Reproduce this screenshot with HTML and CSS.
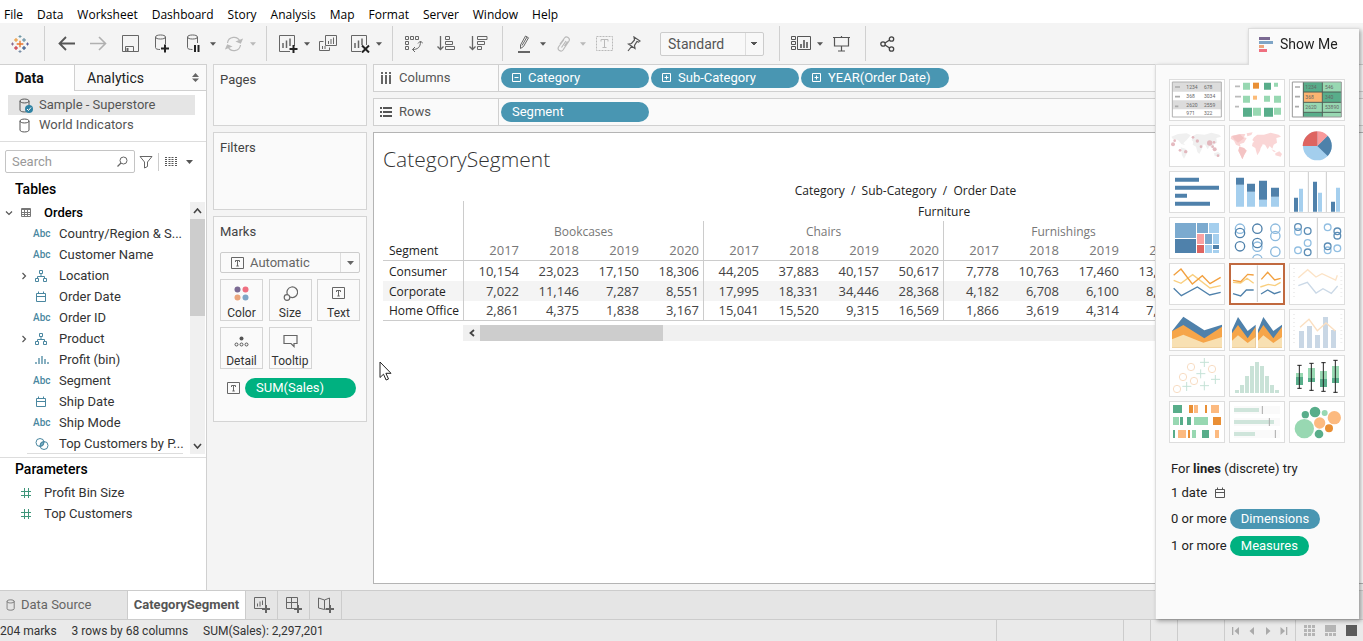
FILE: index.html
```html
<!DOCTYPE html>
<html lang="en">
<head>
<meta charset="utf-8">
<title>CategorySegment</title>
<link rel="stylesheet" href="styles.css">
</head>
<body>
<svg class="defs" aria-hidden="true">
  <symbol id="caret" viewBox="0 0 7 4"><path d="M0 0h7L3.500 4z" fill="currentColor"/></symbol>
  <symbol id="db" viewBox="0 0 12 15"><path d="M1 3v9c0 2.600 9 2.600 9 0V3M1 3c0-2.600 9-2.600 9 0s-9 2.600-9 0z" fill="none" stroke="currentColor"/></symbol>
  <symbol id="hier" viewBox="0 0 12 12"><path d="M4.500 .5h3v3h-3zM6 3.500v3M2.500 8.500v-2h7v2M.5 8.500h3v3h-3zM8.500 8.500h3v3h-3z" fill="none" stroke="currentColor"/></symbol>
  <symbol id="cal" viewBox="0 0 12 12"><path d="M1.500 2.500h9v8h-9zM1.500 5.500h9M3.500 .5v2M8.500 .5v2" fill="none" stroke="currentColor"/></symbol>
  <symbol id="hash" viewBox="0 0 12 12"><path d="M4.500 1v10M8.500 1v10M1 4.500h10M1 8.500h10" fill="none" stroke="currentColor"/></symbol>
  <symbol id="tbox" viewBox="0 0 14 12"><path d="M.5 .5h12v11H.5z" fill="none" stroke="currentColor"/><path d="M4.500 5V3.500h4V5M6.500 3.500v5.500M5.300 9h2.500" fill="none" stroke="currentColor"/></symbol>
  <symbol id="chev" viewBox="0 0 8 8"><path d="M2.500 1l3 3-3 3" fill="none" stroke="currentColor" stroke-width="1.200"/></symbol>
</svg>

<nav class="menu">
  <button>File</button><button>Data</button><button>Worksheet</button><button>Dashboard</button><button>Story</button><button>Analysis</button><button>Map</button><button>Format</button><button>Server</button><button>Window</button><button>Help</button>
</nav>

<div class="toolbar">
  <button class="tool logo" aria-label="Start page"><svg width="18" height="18" viewBox="0 0 54 54" fill="none" stroke-width="3">
    <path d="M27 17v20M17 27h20" stroke="#e8762d" stroke-width="4"/>
    <path d="M15 9v12M9 15h12" stroke="#eb9129"/><path d="M39 9v12M33 15h12" stroke="#5b879b"/>
    <path d="M15 33v12M9 39h12" stroke="#c72035"/><path d="M39 33v12M33 39h12" stroke="#1f447e"/>
    <path d="M27 0v9M22.500 4.500h9" stroke="#7099a6"/><path d="M27 45v9M22.500 49.500h9" stroke="#7b8fa8"/>
    <path d="M4.500 22.500v9M0 27h9" stroke="#8a6a8f"/><path d="M49.500 22.500v9M45 27h9" stroke="#59609c"/></svg></button>
  <span class="sep"></span>
  <button class="tool" aria-label="Undo"><svg width="17" height="15" viewBox="0 0 17 15"><path d="M17 7.500H2M8 1L1.500 7.500 8 14" fill="none" stroke="#555" stroke-width="1.800"/></svg></button>
  <button class="tool" aria-label="Redo"><svg width="17" height="15" viewBox="0 0 17 15"><path d="M0 7.500h15M9 1l6.500 6.500L9 14" fill="none" stroke="#b0b0b0" stroke-width="1.600"/></svg></button>
  <button class="tool" aria-label="Save"><svg width="17" height="17" viewBox="0 0 17 17" fill="none" stroke="#666"><path d="M.5 .5h16v16H.5zM3.500 16.500v-5h8v5"/><path d="M5.500 13v3" stroke-width="2"/></svg></button>
  <button class="tool" aria-label="New data source"><svg width="16" height="19" viewBox="0 0 16 19" fill="none" stroke="#666"><path d="M1.500 3v10.500c0 1.500 2 2 4.500 2M11.500 3v7M1.500 3c0-2.700 10-2.700 10 0s-10 2.700-10 0z"/><path d="M11 10.500v8M7 14.500h8" stroke="#222" stroke-width="2"/></svg></button>
  <button class="tool" aria-label="Pause updates"><svg width="16" height="19" viewBox="0 0 16 19" fill="none" stroke="#666"><path d="M1.500 3v10.500c0 1.500 2 2 5 2M11.500 3v6M1.500 3c0-2.700 10-2.700 10 0s-10 2.700-10 0z"/><path d="M9 11v7M12.500 11v7" stroke="#222" stroke-width="2"/></svg></button>
  <button class="drop" aria-label="Update options"><svg width="6" height="4"><use href="#caret"/></svg></button>
  <button class="tool faint" aria-label="Run update"><svg width="18" height="16" viewBox="0 0 18 16" fill="none" stroke="currentColor" stroke-width="1.200"><path d="M2.500 7A6.500 6.500 0 0 1 15 5.500M15.500 9A6.500 6.500 0 0 1 3 10.500"/><path d="M17 3.500L15.500 7 12 5.500zM1 12.500L2.500 9 6 10.500z" fill="currentColor"/></svg></button>
  <button class="drop faint" aria-label="Run options"><svg width="6" height="4"><use href="#caret"/></svg></button>
  <span class="sep"></span>
  <button class="tool" aria-label="New worksheet"><svg width="20" height="18" viewBox="0 0 20 18" fill="none" stroke="#666"><path d="M12 16.500H1.500V.5h15V11"/><path d="M5 13V8M8.500 13V5.500M12 11V3.500" stroke-width="1.500"/><path d="M15.500 10v8M11.500 14h8" stroke="#222" stroke-width="2"/></svg></button>
  <button class="drop" aria-label="New worksheet options"><svg width="6" height="4"><use href="#caret"/></svg></button>
  <button class="tool" aria-label="Duplicate"><svg width="18" height="17" viewBox="0 0 18 17" fill="none" stroke="#666"><path d="M6.500 .5h11v10h-11zM4.500 6.500h-4v9h10v-3"/><path d="M9.500 9V6M12 9V4M14.500 9V2.500M3.500 14v-3M6 14v-3"/></svg></button>
  <button class="tool" aria-label="Clear sheet"><svg width="20" height="18" viewBox="0 0 20 18" fill="none" stroke="#666"><path d="M11 16.500H1.500V.5h15V10"/><path d="M5 13V8M8.500 13V5.500M12 10V3.500" stroke-width="1.500"/><path d="M12 10.500l7 7M19 10.500l-7 7" stroke="#222" stroke-width="2"/></svg></button>
  <button class="drop" aria-label="Clear options"><svg width="6" height="4"><use href="#caret"/></svg></button>
  <span class="sep"></span>
  <button class="tool" aria-label="Swap rows and columns"><svg width="18" height="17" viewBox="0 0 18 17" fill="none" stroke="#666"><path d="M.5 1.500h3v3h-3zM5.500 1.500h3v3h-3zM10.500 1.500h3v3h-3zM.5 6.500h3v3h-3zM.5 11.500h3v3h-3z"/><path d="M7.500 14.500c5 0 8-2 8-8M13 8.500l2.500-2.500 2.500 2.500M10 12l-2.500 2.500L10 17"/></svg></button>
  <button class="tool" aria-label="Sort ascending"><svg width="19" height="15" viewBox="0 0 19 15" fill="none" stroke="#666"><path d="M3.500 0v13M.5 10.500l3 3 3-3" stroke-width="1.300"/><path d="M8.500 .5h4v3h-4zM8.500 5.500h7v3h-7zM8.500 10.500h9v3h-9z"/></svg></button>
  <button class="tool" aria-label="Sort descending"><svg width="19" height="15" viewBox="0 0 19 15" fill="none" stroke="#666"><path d="M3.500 0v13M.5 10.500l3 3 3-3" stroke-width="1.300"/><path d="M8.500 .5h9.500v3H8.500zM8.500 5.500h7v3h-7zM8.500 10.500h4v3h-4z"/></svg></button>
  <span class="sep"></span>
  <button class="tool" aria-label="Highlight"><svg width="14" height="18" viewBox="0 0 14 18" fill="none" stroke="#666"><path d="M3.500 13.500V10L8.500 1l3 1.800L6.500 11.500zM5 10.500l5-8.500"/><path d="M1 17h12" stroke-width="2"/></svg></button>
  <button class="drop" aria-label="Highlight options"><svg width="6" height="4"><use href="#caret"/></svg></button>
  <button class="tool faint" aria-label="Group members"><svg width="14" height="16" viewBox="0 0 14 16" fill="none" stroke="currentColor" stroke-width="1.200"><path d="M3 8l4.500-6C9.500-.5 13.500 2 12 5l-6 9c-2 2.500-6 0-4.500-3L7 3.500M4.500 11.500L9 5M7.500 10L10.500 5.500"/></svg></button>
  <button class="drop faint" aria-label="Group options"><svg width="6" height="4"><use href="#caret"/></svg></button>
  <button class="tool faint" aria-label="Show mark labels"><svg width="17" height="15" viewBox="0 0 17 15" fill="none" stroke="currentColor"><path d="M.5 .5h16v14H.5z" stroke-dasharray="2 1"/><path d="M5 5.500v-2h7v2M8.500 3.500v8M6.500 11.500h4"/></svg></button>
  <button class="tool pin" aria-label="Fix axes"><svg width="14" height="16" viewBox="0 0 14 16" fill="none" stroke="#555" stroke-width="1.200"><path d="M7 1l6 4-1.500 1-1.500-.5L7.500 9.500l.5 3L1.500 8l3-.5L7.500 4zM4.500 10.500L1 15"/></svg></button>
  <select class="fit" aria-label="Fit"><option>Standard</option></select>
  <span class="sep wide"></span>
  <button class="tool" aria-label="Show cards"><svg width="20" height="15" viewBox="0 0 20 15" fill="none" stroke="#555"><path d="M.5 .5h4v3h-4zM.5 5.500h4v3h-4zM.5 10.500h4v3h-4zM6.500 .5h13v13h-13z"/><path d="M10 12V8M13 12V4M16 12V6" stroke-width="1.600"/></svg></button>
  <button class="drop" aria-label="Card options"><svg width="6" height="4"><use href="#caret"/></svg></button>
  <button class="tool" aria-label="Presentation mode"><svg width="17" height="16" viewBox="0 0 17 16" fill="none" stroke="#555" stroke-width="1.200"><path d="M0 1.500h17M1.500 1.500v8.500h14V1.500M8.500 10v5M5 15h7M8.500 0v1"/></svg></button>
  <span class="sep"></span>
  <button class="tool" aria-label="Share"><svg width="15" height="16" viewBox="0 0 15 16" fill="none" stroke="#444" stroke-width="1.300"><circle cx="3" cy="8" r="2.200"/><circle cx="11.500" cy="3" r="2.200"/><circle cx="11.500" cy="13" r="2.200"/><path d="M5 7l4.600-3M5 9l4.600 3"/></svg></button>
</div>

<main class="work">
  <section class="data-pane">
    <div class="pane-tabs"><button class="on">Data</button><button class="off"><span>Analytics</span><svg width="7" height="9" viewBox="0 0 7 9"><path d="M3.500 0L7 4H0zM3.500 9L7 5.500H0z" fill="#666"/></svg></button></div>
    <ul class="sources">
      <li class="sel"><span class="dbw"><svg width="12" height="15"><use href="#db"/></svg><svg class="tick" width="8" height="8" viewBox="0 0 8 8"><circle cx="4" cy="4" r="4" fill="#2f82a3"/><path d="M2 4l1.500 1.500L6 2.500" fill="none" stroke="#fff"/></svg></span>Sample - Superstore</li>
      <li><span class="dbw"><svg width="12" height="15"><use href="#db"/></svg></span>World Indicators</li>
    </ul>
    <div class="find">
      <label class="searchbox"><input type="text" placeholder="Search" aria-label="Search"><svg width="11" height="11" viewBox="0 0 11 11"><circle cx="6.500" cy="4.500" r="3.500" fill="none" stroke="#666"/><path d="M4 7L.5 10.500" stroke="#666" stroke-width="1.300"/></svg></label>
      <button aria-label="Filter"><svg width="14" height="14" viewBox="0 0 14 14"><path d="M1 1.500h12L8.500 7v4.500l-3 1.500V7z" fill="none" stroke="#666"/></svg></button>
      <span class="bar"></span>
      <button class="view" aria-label="View"><svg width="12" height="9" viewBox="0 0 12 9"><path d="M1 0v9M4.500 0v9M7.500 0v9M11 0v9" stroke="#555" stroke-width="2" stroke-dasharray="1 1"/></svg><svg width="7" height="4"><use href="#caret"/></svg></button>
    </div>
    <h2>Tables</h2>
    <div class="fields-wrap">
      <ul class="fields">
        <li class="root"><svg class="open" width="8" height="8"><use href="#chev"/></svg><svg width="10" height="9" viewBox="0 0 10 9" fill="none" stroke="#777"><path d="M.5 .5h9v8h-9zM0 1.500h10M.5 4.500h9M.5 6.500h9M3.500 2v7M6.500 2v7"/></svg><b>Orders</b></li>
        <li><i></i><em>Abc</em>Country/Region &amp; S...</li>
        <li><i></i><em>Abc</em>Customer Name</li>
        <li><i><svg width="8" height="8"><use href="#chev"/></svg></i><em><svg width="12" height="12"><use href="#hier"/></svg></em>Location</li>
        <li><i></i><em><svg width="12" height="12"><use href="#cal"/></svg></em>Order Date</li>
        <li><i></i><em>Abc</em>Order ID</li>
        <li><i><svg width="8" height="8"><use href="#chev"/></svg></i><em><svg width="12" height="12"><use href="#hier"/></svg></em>Product</li>
        <li><i></i><em><svg width="14" height="9" viewBox="0 0 14 9"><path d="M1 9V7M4 9V3M7 9V1M10 9V4M13 9V7" stroke="currentColor" stroke-width="1.300"/></svg></em>Profit (bin)</li>
        <li><i></i><em>Abc</em>Segment</li>
        <li><i></i><em><svg width="12" height="12"><use href="#cal"/></svg></em>Ship Date</li>
        <li><i></i><em>Abc</em>Ship Mode</li>
        <li><i></i><em><svg width="14" height="12" viewBox="0 0 14 12" stroke="currentColor"><circle cx="5" cy="4.500" r="4" fill="none"/><circle cx="9" cy="7.500" r="4" fill="none"/><path d="M5 8.500Q5 4 9 3.500Q9 8 5 8.500z" fill="#7fb4cb"/></svg></em>Top Customers by P...</li>
      </ul>
      <div class="vbar"><button aria-label="Scroll up"><svg width="9" height="6" viewBox="0 0 9 6"><path d="M1 5l3.500-4L8 5" fill="none" stroke="#444" stroke-width="1.600"/></svg></button><div class="thumb"></div><button class="end" aria-label="Scroll down"><svg width="9" height="6" viewBox="0 0 9 6"><path d="M1 1l3.500 4L8 1" fill="none" stroke="#444" stroke-width="1.600"/></svg></button></div>
    </div>
    <div class="params">
      <h2>Parameters</h2>
      <ul><li><svg width="12" height="12"><use href="#hash"/></svg>Profit Bin Size</li><li><svg width="12" height="12"><use href="#hash"/></svg>Top Customers</li></ul>
    </div>
  </section>

  <section class="cards">
    <div class="card pages"><h3>Pages</h3></div>
    <div class="card filters"><h3>Filters</h3></div>
    <div class="card marks"><h3>Marks</h3>
      <button class="marktype"><svg width="14" height="12"><use href="#tbox"/></svg><span>Automatic</span><b><svg width="7" height="4"><use href="#caret"/></svg></b></button>
      <div class="markgrid">
        <button><svg width="15" height="15" viewBox="0 0 15 15"><circle cx="3.500" cy="3.500" r="3" fill="#7b6a93"/><circle cx="11.500" cy="3.500" r="3" fill="#ef6f80"/><circle cx="3.500" cy="11.500" r="3" fill="#eba57c"/><circle cx="11.500" cy="11.500" r="3" fill="#7fa5c6"/></svg>Color</button>
        <button><svg width="15" height="15" viewBox="0 0 15 15" fill="none" stroke="#666" stroke-width="1.200"><path d="M4.500 8.500A5.300 5.300 0 1 1 7 11"/><circle cx="4" cy="11.500" r="2.800"/></svg>Size</button>
        <button><svg width="14" height="15" viewBox="0 -1 14 15"><use href="#tbox" width="14" height="12"/></svg>Text</button>
        <button><svg width="15" height="15" viewBox="0 0 15 15" fill="none" stroke="#555"><circle cx="7.500" cy="4.500" r="2" fill="#555" stroke="none"/><circle cx="2.500" cy="10.500" r="1.500"/><circle cx="7.500" cy="10.500" r="1.500"/><circle cx="12.500" cy="10.500" r="1.500"/></svg>Detail</button>
        <button><svg width="15" height="15" viewBox="0 0 15 15"><path d="M1 1.500h13v8h-3v3l-3-3H1z" fill="none" stroke="#666" stroke-width="1.200"/></svg>Tooltip</button>
      </div>
      <div class="encoding"><svg width="14" height="12"><use href="#tbox"/></svg><button class="pill green">SUM(Sales)</button></div>
    </div>
  </section>

  <section class="stage">
    <div class="shelf"><div class="shelf-name"><svg width="12" height="12" viewBox="0 0 12 12"><path d="M2 0v2M2 3v9M6 0v2M6 3v9M10 0v2M10 3v9" stroke="#555" stroke-width="1.800"/></svg>Columns</div>
      <div class="pills">
        <button class="pill"><svg width="10" height="10" viewBox="0 0 10 10"><path d="M.5 .5h8v8h-8zM2.500 4.500h4" fill="none" stroke="#fff"/></svg>Category</button>
        <button class="pill"><svg width="10" height="10" viewBox="0 0 10 10"><path d="M.5 .5h8v8h-8zM2.500 4.500h4M4.500 2.500v4" fill="none" stroke="#fff"/></svg>Sub-Category</button>
        <button class="pill"><svg width="10" height="10" viewBox="0 0 10 10"><path d="M.5 .5h8v8h-8zM2.500 4.500h4M4.500 2.500v4" fill="none" stroke="#fff"/></svg>YEAR(Order Date)</button>
      </div></div>
    <div class="shelf"><div class="shelf-name"><svg width="12" height="12" viewBox="0 0 12 12"><path d="M0 2h2M3 2h9M0 6h2M3 6h9M0 10h2M3 10h9" stroke="#555" stroke-width="1.800"/></svg>Rows</div>
      <div class="pills"><button class="pill">Segment</button></div></div>
    <div class="sheet">
      <h1>CategorySegment</h1>
      <div class="crosstab">
        <p class="axis">Category&nbsp; / &nbsp;Sub-Category&nbsp; / &nbsp;Order Date</p>
        <table>
          <colgroup><col class="c0"><col span="16" class="cn"></colgroup>
          <thead>
            <tr><th class="lab"></th><th colspan="16" class="top">Furniture</th></tr>
            <tr><th class="lab"></th><th colspan="4" class="grp">Bookcases</th><th colspan="4" class="grp">Chairs</th><th colspan="4" class="grp">Furnishings</th><th colspan="4"></th></tr>
            <tr class="years"><th class="lab">Segment</th><th>2017</th><th>2018</th><th>2019</th><th class="e">2020</th><th>2017</th><th>2018</th><th>2019</th><th class="e">2020</th><th>2017</th><th>2018</th><th>2019</th><th class="e">2020</th><th></th><th></th><th></th><th></th></tr>
          </thead>
          <tbody>
            <tr><th class="lab">Consumer</th><td>10,154</td><td>23,023</td><td>17,150</td><td class="e">18,306</td><td>44,205</td><td>37,883</td><td>40,157</td><td class="e">50,617</td><td>7,778</td><td>10,763</td><td>17,460</td><td class="e">13,619</td><td></td><td></td><td></td><td></td></tr>
            <tr><th class="lab">Corporate</th><td>7,022</td><td>11,146</td><td>7,287</td><td class="e">8,551</td><td>17,995</td><td>18,331</td><td>34,446</td><td class="e">28,368</td><td>4,182</td><td>6,708</td><td>6,100</td><td class="e">8,011</td><td></td><td></td><td></td><td></td></tr>
            <tr><th class="lab">Home Office</th><td>2,861</td><td>4,375</td><td>1,838</td><td class="e">3,167</td><td>15,041</td><td>15,520</td><td>9,315</td><td class="e">16,569</td><td>1,866</td><td>3,619</td><td>4,314</td><td class="e">7,285</td><td></td><td></td><td></td><td></td></tr>
          </tbody>
        </table>
        <div class="hbar"><button aria-label="Scroll left"><svg width="6" height="8" viewBox="0 0 6 8"><path d="M5 1L1.500 4 5 7" fill="none" stroke="#444" stroke-width="1.800"/></svg></button><div class="thumb"></div></div>
      </div>
      <svg class="cursor" width="13" height="20" viewBox="0 0 13 20"><path d="M1 1v15.500l3.500-3.300 2.600 5.800 2.400-1-2.600-5.700H12z" fill="#fff" stroke="#222"/></svg>
    </div>
  </section>
</main>

<footer>
  <div class="tabs">
    <button class="src"><svg width="10" height="12" viewBox="0 0 12 15"><use href="#db"/></svg>Data Source</button>
    <button class="cur">CategorySegment</button>
    <button class="new" aria-label="New worksheet"><svg width="16" height="16" viewBox="0 0 16 16" fill="none" stroke="#666"><path d="M8 11.500H.5v-11h11V8M3.500 9.500v-3M6 9.500v-5M8.500 8V3.500"/><path d="M12 8v8M8 12h8" stroke-width="2"/></svg></button>
    <button class="new" aria-label="New dashboard"><svg width="16" height="16" viewBox="0 0 16 16" fill="none" stroke="#666"><path d="M8 11.500H.5v-11h11V8M.5 5.500h11M5.500 .5v11"/><path d="M12 8v8M8 12h8" stroke-width="2"/></svg></button>
    <button class="new" aria-label="New story"><svg width="16" height="16" viewBox="0 0 16 16" fill="none" stroke="#666"><path d="M6.500 3L.5 1v10l6 1.500V3l5-2v7M7 12.300l1-.3"/><path d="M12 8v8M8 12h8" stroke-width="2"/></svg></button>
  </div>
  <div class="status">
    <span>204 marks</span><span>3 rows by 68 columns</span><span>SUM(Sales): 2,297,201</span>
    <div class="cells"><span class="a"></span><span class="b"></span><span class="b"></span><span class="c"></span>
      <div class="nav">
        <button aria-label="First sheet"><svg width="8" height="8" viewBox="0 0 8 8" fill="#aaa"><path d="M0 0h1.300v8H0zM7 0v8L2.500 4z"/></svg></button>
        <button aria-label="Previous sheet"><svg width="8" height="8" viewBox="0 0 8 8" fill="#aaa"><path d="M6 0v8L1.500 4z"/></svg></button>
        <button aria-label="Next sheet"><svg width="8" height="8" viewBox="0 0 8 8" fill="#aaa"><path d="M2 0v8l4.500-4z"/></svg></button>
        <button aria-label="Last sheet"><svg width="8" height="8" viewBox="0 0 8 8" fill="#aaa"><path d="M6 0h1.300v8H6zM.5 0v8L5 4z"/></svg></button>
      </div>
      <div class="views">
        <button aria-label="Sheet sorter"><svg width="11" height="11" viewBox="0 0 11 11" fill="#b5b5b5"><path d="M0 0h3v3H0zM4 0h3v3H4zM8 0h3v3H8zM0 4h3v3H0zM4 4h3v3H4zM8 4h3v3H8zM0 8h3v3H0zM4 8h3v3H4zM8 8h3v3H8z"/></svg></button>
        <button aria-label="Filmstrip"><svg width="11" height="11" viewBox="0 0 11 11" fill="#b5b5b5"><path d="M0 0h11v7H0zM0 8h3v3H0zM4 8h3v3H4zM8 8h3v3H8z"/></svg></button>
        <button aria-label="Sheet tabs"><svg width="11" height="11" viewBox="0 0 11 11" fill="#5c5c5c"><path d="M0 0h11v11H0z"/></svg></button>
      </div>
    </div>
  </div>
</footer>

<aside class="showme">
  <button class="showme-tab"><svg width="14" height="15" viewBox="0 0 14 15"><path d="M0 0h11v3H0z" fill="#7b6a93"/><path d="M0 4h14v3H0z" fill="#7fa5c6"/><path d="M0 8h5v3H0z" fill="#eba57c"/><path d="M0 12h8v3H0z" fill="#ef6f80"/></svg>Show Me</button>
  <div class="showme-body">
    <div class="thumbs">
      <button aria-label="Text table"><svg viewBox="60 166 162 120"><path d="M67 172h147v105H67z" fill="#fff"/><path d="M67 172h147v29H67zM67 227h147v27H67z" fill="#dcdcdc"/><path d="M67 172h147v105H67z" fill="none" stroke="#b0b0b0" stroke-width="3"/><path d="M75 187h15M75 216h15M75 245h10" stroke="#aaa" stroke-width="5"/><g class="tiny"><text x="109" y="193">1234</text><text x="162" y="193">678</text><text x="109" y="220">368</text><text x="162" y="220">3034</text><text x="109" y="246">2620</text><text x="162" y="246">2559</text><text x="109" y="271">971</text><text x="162" y="271">322</text></g></svg></button>
      <button aria-label="Heat map"><svg viewBox="240 166 162 120"><path d="M255 185h15M255 216h18M255 246h12" stroke="#bbb" stroke-width="5"/><path d="M279 174h21v21h-21zM279 213h21v21h-21zM342 213h18v18h-18zM372 174h12v12h-12zM372 213h21v21h-21zM309 249h24v24h-24zM372 249h21v21h-21z" fill="#98d8b2"/><path d="M342 174h21v21h-21zM279 249h27v27h-27zM342 249h27v27h-27z" fill="#58ad8a"/><path d="M309 174h18v18h-18z" fill="#e98f35"/><path d="M309 213h12v12h-12z" fill="#fcbb78"/></svg></button>
      <button aria-label="Highlight table"><svg viewBox="420 166 162 120"><path d="M427 172h147v105H427z" fill="#fff"/><path d="M460 172h57v30h-57zM517 202h57v31h-57zM460 263h57v14h-57z" fill="#58ad8a"/><path d="M517 172h57v30h-57zM460 233h114v30H460zM517 263h57v14h-57z" fill="#98d8b2"/><path d="M460 202h57v31h-57z" fill="#fcb471"/><path d="M460 172v105M517 172v105M460 202h114M460 233h114M460 263h114" stroke="#4e5f57" stroke-width="3"/><path d="M427 172h147v105H427z" fill="none" stroke="#999" stroke-width="3"/><path d="M435 187h15M435 216h15M435 246h12" stroke="#aaa" stroke-width="5"/><g class="tiny"><text x="466" y="192">1234</text><text x="525" y="192">546</text><text x="466" y="222">368</text><text x="525" y="222">340</text><text x="466" y="253">2620</text><text x="525" y="253">53890</text></g></svg></button>

      <button aria-label="Symbol map"><svg viewBox="60 304 162 120"><path d="M64 336l20-8 26-2 12 6-10 12-12 12 6 6-12-4-10-12-16-4zM92 368l14 4 8 8-12 22-6-10zM128 334l12-6 24 2 20-6 24 6 5 6-14 4 2 14-10 6-4 12-8-8-6 10-8-14-10-2-10-6-12 2-8-8zM130 350l20 0 10 10-4 12-8 16-6-6-4-16-10-6zM192 386l12-4 8 6-4 8-14-2z" fill="#f0f0f0"/><g fill="#dfaab1" opacity=".8"><circle cx="69" cy="359" r="6"/><circle cx="74" cy="348" r="4"/><circle cx="90" cy="377" r="4"/><circle cx="107" cy="381" r="5"/><circle cx="129" cy="338" r="4"/><circle cx="142" cy="349" r="5"/><circle cx="179" cy="355" r="8"/><circle cx="192" cy="353" r="4"/><circle cx="188" cy="366" r="4"/><circle cx="194" cy="374" r="6"/><circle cx="153" cy="366" r="4"/><circle cx="204" cy="393" r="4"/></g></svg></button>
      <button aria-label="Filled map"><svg viewBox="240 304 162 120"><path d="M244 334l16-4 12-2 14 0-4 10 8 2-8 14-12 4 2 8-14-6-6-12-10-6zM290 326l18-3-4 8-12 4zM268 366l14 4 8 8-7 12-6 14-6-14-6-12zM308 354l10-6 14 4 6 8-6 10-2 8-8 14-4-14-2-8-10-6zM312 338l10-8 20 0 20-6 24 6 7 6-14 4 2 14-10 6-4 12-8-8-6 10-8-14-10-2-6-6-14 2-8-8zM376 386l12-6 8 8-4 8-16-4zM364 374l14 6-6 2z" fill="#fad6d6"/><path d="M246 334l24-5 12 12-18 13-12-10zM268 366l14 4 8 8-7 12-6 14-6-14-6-12z" fill="#f4c4c4"/></svg></button>
      <button aria-label="Pie chart"><svg viewBox="420 304 162 120"><circle cx="502" cy="364" r="43" fill="#a3ceed"/><path d="M502 364L533 333A44 44 0 0 1 533 394z" fill="#4d81aa"/><path d="M502 364V320A44 44 0 0 1 533 333z" fill="#f9999a"/><path d="M502 364H458A44 44 0 0 1 502 320z" fill="#de6460"/></svg></button>

      <button aria-label="Horizontal bars"><svg viewBox="60 442 162 120"><path d="M75 459h72v12H75zM75 483h132v12H75zM75 507h36v12H75zM75 531h105v12H75z" fill="#4f81ab"/></svg></button>
      <button aria-label="Stacked bars"><svg viewBox="240 442 162 120"><path d="M258 480h24v66h-24zM291 501h24v45h-24zM327 525h24v21h-24zM363 516h24v30h-24z" fill="#a5cfee"/><path d="M258 459h24v21h-24zM291 477h24v24h-24zM327 468h24v57h-24zM363 489h24v27h-24z" fill="#4f81ab"/></svg></button>
      <button aria-label="Side-by-side bars"><svg viewBox="420 442 162 120"><path d="M475 442v120M529 442v120" stroke="#ccc" stroke-width="3"/><path d="M432 519h12v42h-12zM489 471h12v90h-12zM543 531h12v30h-12z" fill="#4f81ab"/><path d="M447 492h12v69h-12zM504 504h12v57h-12zM558 489h12v72h-12z" fill="#a5cfee"/></svg></button>

      <button aria-label="Treemap"><svg viewBox="60 -36 162 120"><path d="M75-21h63v45H75zM141-21h33v30h-33zM165 12h21v30h-21z" fill="#7baacf"/><path d="M177-21h30v30h-30zM189 12h18v30h-18zM165 45h21v24h-21zM189 60h18v9h-18z" fill="#a5cfee"/><path d="M75 27h63v42H75zM189 45h18v12h-18z" fill="#4f81ab"/><path d="M141 12h21v30h-21z" fill="#f9a1a1"/><path d="M141 45h21v24h-21z" fill="#de6460"/></svg></button>
      <button aria-label="Circle views"><svg viewBox="240 -36 162 120" fill="none" stroke-width="4"><g stroke="#8cbade"><circle cx="270" cy="-4" r="14"/><circle cx="322" cy="50" r="14"/><circle cx="322" cy="88" r="14"/><circle cx="376" cy="-4" r="14"/><circle cx="376" cy="18" r="14"/><circle cx="376" cy="65" r="14"/></g><g stroke="#4f81ab"><circle cx="270" cy="9" r="14"/><circle cx="270" cy="49" r="14"/><circle cx="322" cy="-4" r="14"/><circle cx="322" cy="39" r="14"/></g></svg></button>
      <button aria-label="Side-by-side circles"><svg viewBox="420 -36 162 120" fill="none" stroke-width="4"><path d="M502-36V84" stroke="#ccc" stroke-width="3"/><g stroke="#92bfe2"><circle cx="444" cy="5" r="10"/><circle cx="444" cy="61" r="10"/><circle cx="473" cy="39" r="10"/><circle cx="533" cy="-8" r="10"/><circle cx="533" cy="61" r="10"/><circle cx="562" cy="55" r="10"/></g><g stroke="#5c8db5"><circle cx="444" cy="-9" r="10"/><circle cx="473" cy="3" r="10"/><circle cx="473" cy="67" r="10"/><circle cx="562" cy="4" r="10"/><circle cx="562" cy="17" r="10"/><circle cx="533" cy="49" r="10"/></g></svg></button>

      <button aria-label="Continuous lines"><svg viewBox="60 102 162 120" fill="none" stroke-width="4"><path d="M71 151l22 9 35-26 52 40 32-7" stroke="#f9cf7f"/><path d="M71 136l22-19 34 45 30-25 23 24 32-19" stroke="#f2a03f"/><path d="M71 175l23 22 48-26 37 24 33-8" stroke="#4f81ab"/></svg></button>
      <button class="picked" aria-label="Discrete lines"><svg viewBox="240 102 162 120" fill="none" stroke-width="4"><path d="M322 106v110" stroke="#ccc" stroke-width="3"/><path d="M249 157l23 2 19-14 20 15M331 171l24-8 20 4 17-10" stroke="#f9cf7f"/><path d="M249 151l23 4 21-22 18 2M334 148l19-21 21 23 18-5" stroke="#f2a03f"/><path d="M249 191l23 7 17-18h22M333 192l20-12 20 11 19-6" stroke="#4f81ab"/></svg></button>
      <button aria-label="Dual lines"><svg viewBox="420 102 162 120" fill="none" stroke-width="4"><path d="M432 115v90M574 115v90" stroke="#e9e9e9" stroke-width="6" stroke-dasharray="2 10"/><path d="M445 143l28-24 25 22 18-10 41 19 5-14" stroke="#fce3c6"/><path d="M445 167l27-10 26 32 21-13 25 14 19-22" stroke="#cbd9e7"/></svg></button>

      <button aria-label="Continuous area"><svg viewBox="60 240 162 120"><path d="M66 303l34-43 63 41 53-17v69H66z" fill="#4f81ab"/><path d="M66 304l34-19 63 40 53-35v63H66z" fill="#f6a549"/><path d="M66 328l34-14 60 24 56-17v32H66z" fill="#f8e0b2"/></svg></button>
      <button aria-label="Discrete area"><svg viewBox="240 240 162 120"><path d="M246 300l18-39 29 42 24-19v69h-71zM324 300l16-39 30 42 26-19v69h-72z" fill="#4f81ab"/><path d="M246 310l18-25 29 40 24-35v63h-71zM324 310l16-25 30 40 26-35v63h-72z" fill="#f6a549"/><path d="M246 332l18-16 29 23 24-18v32h-71zM324 332l16-16 30 23 26-18v32h-72z" fill="#f8e0b2"/></svg></button>
      <button aria-label="Dual combination"><svg viewBox="420 240 162 120" fill="none"><path d="M432 253v95M574 253v95" stroke="#e9e9e9" stroke-width="6" stroke-dasharray="2 10"/><path d="M447 303h15v51h-15zM471 288h15v66h-15zM495 315h15v39h-15zM519 261h15v93h-15zM543 300h15v54h-15z" fill="#c9d7e5"/><path d="M450 292l27-24 25 34 26-23 28 24" stroke="#fbdfc1" stroke-width="4"/></svg></button>

      <button aria-label="Scatter plot"><svg viewBox="60 378 162 120" fill="none" stroke-width="3"><g stroke="#f8ddc4"><circle cx="123" cy="411" r="11"/><circle cx="186" cy="417" r="11"/><circle cx="99" cy="441" r="11"/><circle cx="132" cy="453" r="11"/><circle cx="81" cy="477" r="11"/></g><path d="M150 397h27M163 384v27M139 431h27M152 418v27M183 448h27M196 435v27M97 469h27M110 456v27M150 467h27M163 454v27" stroke="#c5e2d7"/></svg></button>
      <button aria-label="Histogram"><svg viewBox="240 378 162 120"><path d="M255 480h12v9h-12zM270 465h12v24h-12zM285 438h12v51h-12zM300 408h12v81h-12zM315 396h12v93h-12zM330 408h12v81h-12zM345 438h12v51h-12zM360 465h12v24h-12zM375 480h12v9h-12z" fill="#c9e2d7"/></svg></button>
      <button aria-label="Box plot"><svg viewBox="420 378 162 120"><path d="M438 429h21v12h-21zM474 414h21v30h-21zM510 423h21v24h-21zM546 408h21v36h-21z" fill="#98d8b2"/><path d="M438 441h21v24h-21zM474 444h21v12h-21zM510 447h21v24h-21zM546 444h21v15h-21z" fill="#58ad8a"/><path d="M448 405v70M442 406h13M442 475h13M484 400v82M478 400h13M478 481h13M520 397v87M514 398h13M514 484h13M556 391v97M550 391h13M550 487h13" stroke="#222" stroke-width="3"/></svg></button>

      <button aria-label="Gantt"><svg viewBox="60 516 162 120"><path d="M69 525h27v24H69zM90 561h9v24h-9zM111 561h12v24h-12zM69 600h6v24h-6zM156 600h21v24h-21z" fill="#58ad8a"/><path d="M69 561h18v24H69zM132 561h42v24h-42zM126 600h12v24h-12z" fill="#98d8b2"/><path d="M132 525h12v24h-12zM183 525h24v24h-24zM84 600h24v24H84zM195 600h12v24h-12z" fill="#fcba80"/><path d="M117 525h12v24h-12zM165 525h6v24h-6zM189 561h24v24h-24zM114 600h6v24h-6z" fill="#e98f35"/></svg></button>
      <button aria-label="Bullet graph"><svg viewBox="240 516 162 120"><path d="M252 528h138v24H252zM252 564h138v24H252zM252 600h138v24H252z" fill="#fafafa"/><path d="M252 534h75v12h-75zM252 570h120v12H252zM252 606h63v12h-63z" fill="#cfe5db"/><path d="M337 528v24M358 564v24M376 600v24" stroke="#aaa" stroke-width="3"/></svg></button>
      <button aria-label="Packed bubbles"><svg viewBox="420 516 162 120"><g fill="#98d8b2"><circle cx="463" cy="596" r="29"/><circle cx="524" cy="549" r="9"/></g><g fill="#58ad8a"><circle cx="466" cy="554" r="11"/><circle cx="495" cy="546" r="16"/><circle cx="507" cy="612" r="13"/></g><g fill="#fcba80"><circle cx="553" cy="563" r="20"/><circle cx="509" cy="579" r="17"/></g><circle cx="537" cy="595" r="12" fill="#e98f35"/></svg></button>
    </div>
    <div class="hint">
      <p>For <b>lines</b> (discrete) try</p>
      <p>1 date <svg width="12" height="12"><use href="#cal"/></svg></p>
      <p>0 or more <span class="pill">Dimensions</span></p>
      <p>1 or more <span class="pill green">Measures</span></p>
    </div>
  </div>
</aside>
</body>
</html>
```
FILE: styles.css
```css
* { box-sizing: border-box; }
body { margin: 0; height: 100vh; position: relative; overflow: hidden; display: flex; flex-direction: column; background: #f4f4f4; color: #333; font: 13px/20px Roboto, "Liberation Sans", sans-serif; }
button { font: inherit; color: inherit; background: none; border: 0; padding: 0; margin: 0; text-align: left; }
ul { list-style: none; margin: 0; padding: 0; }
h1, h2, h3, p { margin: 0; font-weight: 400; }
svg { display: block; flex: none; }
.defs { position: absolute; width: 0; height: 0; }

.menu { display: flex; gap: 14px; padding: 5px 4px 0; height: 23px; flex: none; background: #fff; color: #000; font: 12px/17px "Open Sans", sans-serif; }

.toolbar { display: flex; align-items: center; height: 41px; flex: none; padding-left: 4px; color: #555; }
.tool { width: 32px; height: 32px; display: flex; align-items: center; justify-content: center; }
.drop { width: 8px; height: 32px; display: flex; align-items: center; }
.faint { color: #b9b9b9; }
.pin { width: 28px; }
.sep { width: 1px; height: 35px; margin: 0 5px 0 8px; background: #d0d0d0; }
.sep.wide { margin-left: 15px; }
.fit { width: 104px; height: 24px; margin-left: 12px; padding: 0 7px; border: 1px solid #ccc; border-radius: 2px; color: #555; font: 14px Roboto, sans-serif; appearance: none;
  background: linear-gradient(#ddd, #ddd) right 17px top / 1px 100% no-repeat, linear-gradient(to top right, #0000 50%, #555 51%) right 9px center / 4px 4px no-repeat, linear-gradient(to top left, #0000 50%, #555 51%) right 5px center / 4px 4px no-repeat, #f8f8f8; }

.work { flex: 1; min-height: 0; display: grid; grid-template-columns: 207px 154px minmax(0, 1fr); column-gap: 6px; padding-bottom: 6px; }
.data-pane { display: flex; flex-direction: column; background: #fff; border-right: 1px solid #d0d0d0; margin-bottom: -6px; min-height: 0; }
.pane-tabs { display: flex; height: 27px; flex: none; font-size: 14px; border-top: 1px solid #d0d0d0; }
.pane-tabs .on { width: 74px; padding-left: 15px; font-weight: 700; color: #111; }
.pane-tabs .off { flex: 1; display: flex; align-items: center; justify-content: space-between; padding: 0 7px 0 12px; background: #fafafa; border: solid #d0d0d0; border-width: 0 0 1px 1px; color: #222; }
.sources { padding: 4px 11px 6px 8px; border-bottom: 1px solid #ddd; color: #555; }
.sources li { display: flex; align-items: center; height: 20px; padding-left: 11px; }
.sources .sel { background: #e5e5e5; }
.dbw { position: relative; width: 20px; }
.tick { position: absolute; left: 6px; top: 7px; }
.find { display: flex; align-items: center; padding: 8px 12px 6px 5px; height: 37px; color: #555; }
.searchbox { display: flex; align-items: center; width: 130px; height: 23px; padding: 0 6px; border: 1px solid #c4c4c4; border-radius: 2px; }
.searchbox input { flex: 1; min-width: 0; border: 0; padding: 0; background: none; outline: 0; font: inherit; }
.searchbox input::placeholder { color: #999; opacity: 1; }
.find button { margin-left: 4px; }
.bar { width: 1px; height: 18px; margin-left: 5px; background: #ccc; }
.find .view { display: flex; align-items: center; gap: 9px; margin-left: 6px; }
h2 { font-size: 14px; font-weight: 500; color: #000; padding-left: 15px; }
.fields-wrap { display: flex; margin-top: 3px; border-bottom: 1px solid #ddd; padding-bottom: 3px; }
.fields { flex: 1; min-width: 0; white-space: nowrap; }
.fields li { display: flex; align-items: center; height: 21px; }
.fields li:last-child { background: linear-gradient(#ddd, #ddd) 27px bottom / 156px 1px no-repeat; }
.fields i { width: 33px; padding-left: 20px; color: #555; }
.fields em { width: 26px; font: 500 10px/12px Roboto, sans-serif; color: #4a87a0; }
.fields em svg { margin-left: 2px; }
.fields .root { color: #000; }
.root .open { transform: rotate(90deg); margin: 0 8px 0 5px; color: #555; }
.root b { font-weight: 500; margin-left: 13px; }
.vbar { width: 15px; margin-right: 1px; background: #f0f0f0; display: flex; flex-direction: column; }
.vbar button { height: 17px; display: flex; align-items: center; justify-content: center; }
.vbar .thumb { height: 97px; background: #cdcdcd; }
.vbar .end { margin-top: auto; }
.params { padding-top: 1px; }
.params ul { padding: 3px 0 0 20px; }
.params li { display: flex; align-items: center; gap: 12px; height: 21px; }
.params svg { color: #3f967a; }

.cards { display: flex; flex-direction: column; gap: 6px; }
.card { border: 1px solid #d4d4d4; background: #fafafa; padding: 5px 6px; }
.card h3 { font-size: 13px; color: #444; }
.card svg { color: #666; }
.pages { height: 62px; }
.filters { height: 78px; }
.marks { height: 206px; }
.marktype { display: flex; align-items: center; width: 100%; height: 21px; margin-top: 10px; border: 1px solid #ccc; border-radius: 2px; padding-left: 10px; color: #666; }
.marktype span { flex: 1; margin-left: 5px; }
.marktype b { width: 19px; height: 100%; border-left: 1px solid #ddd; display: grid; place-items: center; }
.markgrid { display: grid; grid-template-columns: repeat(3, 43px); justify-content: space-between; gap: 6px 5px; margin-top: 6px; }
.markgrid button { height: 42px; border: 1px solid #d4d4d4; display: flex; flex-direction: column; align-items: center; padding-top: 6px; gap: 4px; font-size: 12px; line-height: 16px; }
.encoding { display: flex; align-items: center; gap: 4px; padding: 9px 4px 0 7px; }
.encoding .pill { flex: 1; }

.pill { display: flex; align-items: center; gap: 6px; height: 20px; border-radius: 10px; padding: 0 11px; background: #4996b2; color: #fff; white-space: nowrap; }
.pill.green { background: #00b180; }

.stage { display: flex; flex-direction: column; gap: 6px; min-width: 0; }
.shelf { display: flex; height: 28px; flex: none; border: 1px solid #d0d0d0; border-right: 0; background: #fafafa; }
.shelf-name { width: 125px; display: flex; align-items: center; gap: 7px; padding-left: 6px; border-right: 1px solid #d0d0d0; color: #555; }
.pills { display: flex; align-items: center; gap: 2px; padding-left: 2px; }
.pills .pill { width: 148px; }

.sheet { flex: 1; position: relative; border: 1px solid #b4b4b4; border-right: 0; background: #fff; padding: 11px 15px 0 9px; font-family: "Open Sans", sans-serif; overflow: hidden; }
h1 { font: 300 21px/30px "Open Sans", sans-serif; color: #333; }
.crosstab { margin-top: 7px; overflow: hidden; }
.axis { padding-left: 80px; text-align: center; font-size: 12px; color: #222; }
table { width: 1041px; table-layout: fixed; border-collapse: separate; border-spacing: 0; font-size: 12px; line-height: 19px; }
.c0 { width: 81px; }
.cn { width: 60px; }
th, td { padding: 0; height: 20px; text-align: center; font-weight: 400; white-space: nowrap; color: #222; }
td { text-align: right; padding-right: 5px; font-size: 13px; color: #444; }
.lab { text-align: left; padding-left: 6px; font-weight: 500; border-right: 1px solid #ccc; }
.grp { color: #777; }
.grp, .e { border-right: 1px solid #ccc; }
td.e, .years th.e:not(.lab) { padding-right: 4px; }
.years th { border-bottom: 1px solid #ccc; }
.years th:not(.lab) { text-align: right; padding-right: 5px; color: #777; font-size: 13px; }
tbody tr:nth-child(2) > * { background: #f4f4f4; }
tbody tr:last-child > * { border-bottom: 1px solid #ccc; }
.hbar { display: flex; height: 16px; margin: 4px 0 0 80px; background: #f0f0f0; }
.hbar button { width: 17px; display: grid; place-items: center; }
.hbar .thumb { width: 183px; background: #cdcdcd; }
.cursor { position: absolute; left: 5px; top: 228px; }

footer { flex: none; }
.tabs { display: flex; height: 30px; background: #e5e5e5; border: solid #ccc; border-width: 1px 0; color: #666; }
.tabs button { border-right: 1px solid #ccc; }
.src { display: flex; align-items: center; gap: 5px; width: 128px; padding-left: 6px; }
.cur { width: 118px; background: #fff; text-align: center; font-weight: 700; color: #555; }
.tabs .new { width: 32px; display: grid; place-items: center; }
.status { display: flex; gap: 15px; height: 21px; background: #eaeaea; font-size: 12px; line-height: 22px; color: #333; }
.cells { margin-left: auto; display: flex; }
.cells > * { border-left: 1px solid #ccc; }
.a { width: 127px; }
.b { width: 27px; }
.c { width: 47px; }
.nav { display: flex; align-items: center; gap: 8px; width: 71px; padding-left: 7px; }
.views { display: flex; align-items: center; gap: 10px; padding: 0 6px 0 8px; }

.showme { position: absolute; top: 28px; right: 4px; bottom: 22px; width: 204px; display: flex; flex-direction: column; align-items: flex-end; filter: drop-shadow(2px 2px 2px #0005); }
.showme-tab { width: 111px; height: 37px; margin-bottom: -1px; z-index: 1; display: flex; align-items: center; gap: 7px; padding: 0 0 6px 10px; background: #fafafa; border: solid #ddd; border-width: 1px 0 0 1px; font-size: 14px; color: #222; }
.showme-body { flex: 1; width: 100%; background: #fafafa; border: solid #ddd; border-width: 1px 0 0 1px; padding: 14px 0 0 13px; }
.thumbs { display: grid; grid-template-columns: repeat(3, 56px); gap: 4px; }
.thumbs button { height: 42px; border: 1px solid #ddd; background: #fff; }
.thumbs svg { width: 100%; height: 100%; }
.thumbs .picked { outline: 2px solid #c0693f; outline-offset: -2px; }
.tiny { font: 15px Roboto, sans-serif; fill: #666; }
.hint { padding: 14px 0 0 2px; color: #222; }
.hint p { display: flex; align-items: center; height: 24px; white-space: pre; }
.hint p + p + p { height: 27px; }
.hint b { font-weight: 700; }
.hint .pill { padding: 0 11px; }
.hint svg { margin-left: 4px; color: #555; }
```
